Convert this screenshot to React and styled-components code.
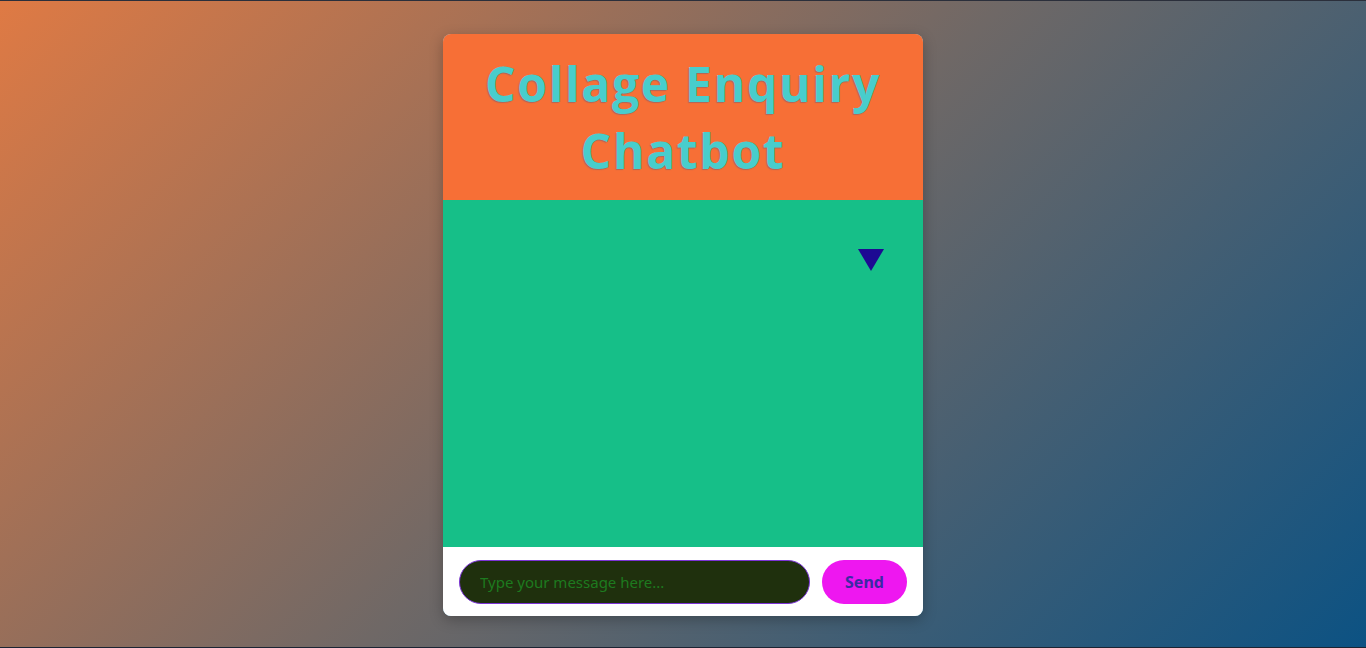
import React from "react";
import styled, { createGlobalStyle } from "styled-components";

const GlobalStyle = createGlobalStyle`
  html, body {
    margin: 0;
    padding: 0;
  }
  body {
    font-family: "Open Sans", "Noto Sans", sans-serif;
  }
`;

export default function App() {
  return (
    <>
      <GlobalStyle />
      <Page>
        <ChatCard>
          <Header>
            <Title>Collage Enquiry Chatbot</Title>
          </Header>
          <Messages>
            <Toggle />
          </Messages>
          <InputBar>
            <MessageInput type="text" placeholder="Type your message here..." />
            <SendButton>Send</SendButton>
          </InputBar>
        </ChatCard>
      </Page>
    </>
  );
}

const Page = styled.main`
  box-sizing: border-box;
  height: 648px;
  border-top: 1px solid #2b2f3b;
  border-bottom: 1px solid #1b2433;
  background: linear-gradient(135deg, #df7a44 0%, #6f6866 50%, #0c5283 100%);
  display: flex;
  justify-content: center;
  padding-top: 33px;
`;

const ChatCard = styled.section`
  width: 480px;
  height: 582px;
  display: flex;
  flex-direction: column;
  border-radius: 8px;
  overflow: hidden;
  background: #8fd3ea;
  box-shadow: 0 4px 14px rgba(0, 0, 0, 0.25);
`;

const Header = styled.header`
  background: #f76f36;
  height: 166px;
  display: flex;
  align-items: center;
  justify-content: center;
`;

const Title = styled.h1`
  margin: 0;
  text-align: center;
  font-family: "Open Sans", "Noto Sans", sans-serif;
  font-weight: 700;
  font-size: 48px;
  line-height: 67px;
  letter-spacing: 1.7px;
  color: #48cdcc;
  text-shadow: -1px 1px 1px rgba(90, 90, 130, 0.45);
  padding: 0 30px;
`;

const Messages = styled.div`
  flex: 1;
  background: #16bf88;
  display: flex;
  justify-content: flex-end;
  align-items: flex-start;
  padding: 49px 39px;
`;

const Toggle = styled.div`
  width: 0;
  height: 0;
  border-left: 13px solid transparent;
  border-right: 13px solid transparent;
  border-top: 22px solid #1d0a93;
`;

const InputBar = styled.div`
  background: #ffffff;
  height: 69px;
  box-sizing: border-box;
  padding: 13px 16px 12px;
  display: flex;
  gap: 12px;
  align-items: center;
`;

const MessageInput = styled.input`
  flex: 1;
  height: 44px;
  box-sizing: border-box;
  border-radius: 22px;
  border: 1px solid #7b33d6;
  background: #1f300d;
  padding: 0 20px;
  font-family: "Noto Sans", sans-serif;
  font-size: 15px;
  color: #2a8a2a;
  outline: none;
  &::placeholder {
    color: #1d7a1f;
  }
`;

const SendButton = styled.button`
  width: 85px;
  height: 44px;
  border: none;
  border-radius: 22px;
  background: #ee17f0;
  color: #3a2aa3;
  font-family: "Noto Sans", sans-serif;
  font-weight: 700;
  font-size: 16px;
  cursor: pointer;
`;
